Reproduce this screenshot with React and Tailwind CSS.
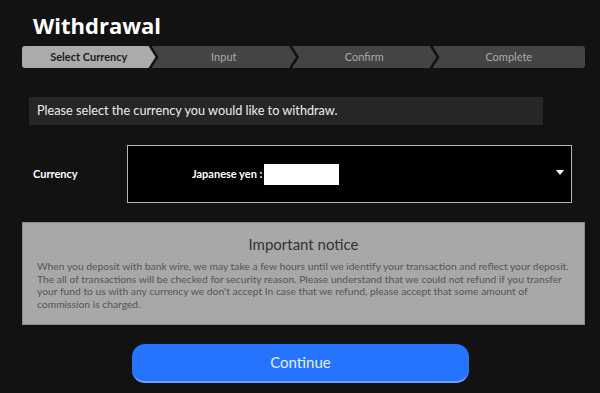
export default function App() {
    const steps = [
        { label: 'Select Currency', active: true, w: 'w-[134px]', shape: 'first' },
        { label: 'Input', active: false, w: 'w-[145px]', shape: 'mid' },
        { label: 'Confirm', active: false, w: 'w-[145px]', shape: 'mid' },
        { label: 'Complete', active: false, w: 'w-[153px]', shape: 'last' }
    ];

    const shapes = {
        first: '[clip-path:polygon(0_0,calc(100%-7px)_0,100%_50%,calc(100%-7px)_100%,0_100%)]',
        mid: '-ml-[4px] [clip-path:polygon(0_0,calc(100%-7px)_0,100%_50%,calc(100%-7px)_100%,0_100%,7px_50%)]',
        last: '-ml-[4px] [clip-path:polygon(0_0,100%_0,100%_100%,0_100%,7px_50%)]'
    };

    return (
        <div className="min-h-screen w-[600px] h-[393px] overflow-hidden bg-[#121212] font-['Lato','Liberation_Sans',sans-serif]">
            <div className="w-[563px] ml-[22px]">
                {/* Title */}
                <h1 className="pl-[11px] pt-[9px] text-[22px] leading-[32px] font-bold text-white font-['Open_Sans','Liberation_Sans',sans-serif]">Withdrawal</h1>

                {/* Steps */}
                <div className="mt-[5px] flex h-[22px] rounded-[3px] overflow-hidden">
                    {steps.map((step, index) => (
                        <div
                            key={index}
                            className={`${step.w} ${shapes[step.shape]} flex items-center justify-center text-[11px] ${step.active ? 'bg-[#ababab] text-[#1c1c1c] font-bold' : 'bg-[#444444] text-[#a9a9a9]'}`}
                        >
                            {step.label}
                        </div>
                    ))}
                </div>

                {/* Instruction */}
                <div className="mt-[29px] ml-[7px] w-[514px] h-[28px] bg-[#262626] flex items-center pl-[8px] text-[12.7px] text-[#eeeeee]">
                    Please select the currency you would like to withdraw.
                </div>

                {/* Currency */}
                <div className="mt-[20px] flex items-center">
                    <div className="w-[105px] pl-[11px] text-[11px] font-bold text-white">Currency</div>
                    <div className="relative w-[445px] h-[58px] bg-black border border-[#b5b5b5] flex items-center">
                        <span className="ml-[64px] text-[11px] font-bold text-white">Japanese yen :</span>
                        <span className="ml-[2px] w-[75px] h-[21px] bg-white"></span>
                        <svg className="absolute right-[7px] top-[24px]" width="8" height="5" viewBox="0 0 8 5">
                            <path d="M0 0H8L4 5Z" fill="#ffffff" />
                        </svg>
                    </div>
                </div>

                {/* Important notice */}
                <div className="mt-[19px] h-[103px] bg-[#a8a8a8] border border-[#8a8a8a] px-[14px] pt-[11px]">
                    <h2 className="text-center text-[15px] leading-[20px] text-[#333333]">Important notice</h2>
                    <p className="mt-[6px] text-[10.3px] leading-[12.6px] text-[#555555]">
                        When you deposit with bank wire, we may take a few hours until we identify your transaction and reflect your deposit. The all of transactions will be checked for security reason. Please understand that we could not refund if you transfer your fund to us with any currency we don't accept In case that we refund, please accept that some amount of commission is charged.
                    </p>
                </div>

                {/* Continue */}
                <div className="mt-[19px] flex justify-center pl-[3px] pr-[9px]">
                    <button className="w-[337px] h-[39px] rounded-[13px] bg-[#2673ff] border-b-2 border-[#6aa0ff] text-[15px] text-[#e3edff]">
                        Continue
                    </button>
                </div>
            </div>
        </div>
    );
}
